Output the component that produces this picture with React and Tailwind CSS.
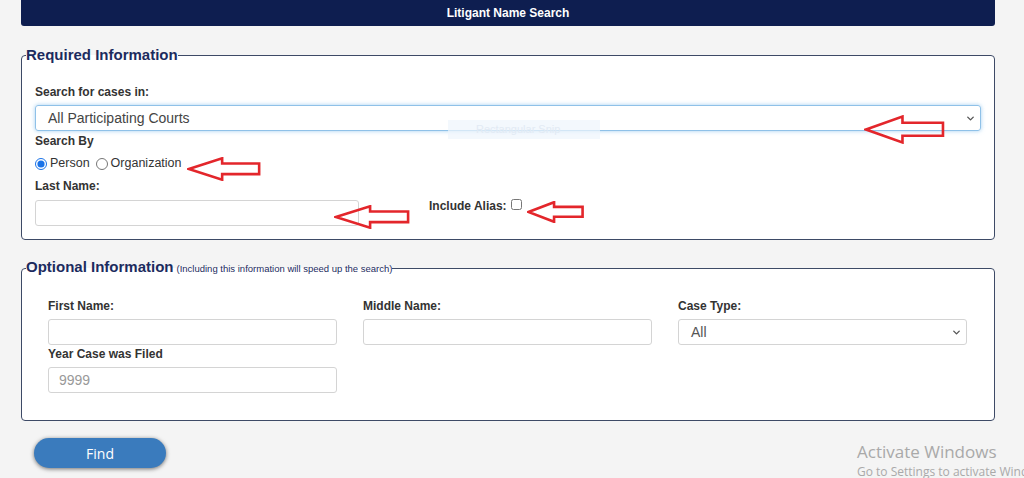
import React from 'react';
import { ChevronDown } from 'lucide-react';

const RedArrow = ({ className }) => (
  <svg
    className={`absolute pointer-events-none ${className}`}
    viewBox="0 0 80 28"
    preserveAspectRatio="none"
  >
    <polygon
      points="2,14 38,1.5 38,7.5 78,7.5 78,20 38,20 38,26.5"
      fill="none"
      stroke="#e3262b"
      strokeWidth="2.6"
      strokeLinejoin="miter"
      vectorEffect="non-scaling-stroke"
    />
  </svg>
);

const Label = ({ children, className = '' }) => (
  <div className={`text-[12px] leading-[14px] font-bold text-[#333] ${className}`}>{children}</div>
);

const TextInput = ({ placeholder, className = '' }) => (
  <input
    type="text"
    placeholder={placeholder}
    className={`h-[26px] border border-[#d4d4d4] rounded-[3px] bg-white px-[10px] text-[14px] text-[#555] placeholder:text-[#999] outline-none ${className}`}
  />
);

const App = () => {
  return (
    <div
      className="relative w-[1024px] h-[478px] overflow-hidden bg-[#f4f4f4]"
      style={{ fontFamily: '"Liberation Sans", Arial, sans-serif' }}
    >
      {/* header */}
      <div className="ml-[21px] w-[974px] h-[26px] bg-[#0e1e50] rounded-b-[3px] flex items-center justify-center">
        <span className="text-white text-[12px] font-bold">Litigant Name Search</span>
      </div>

      {/* required info */}
      <fieldset className="ml-[21px] mt-[20px] w-[974px] border border-[#3d4a66] rounded-[4px] bg-white px-[13px] pb-[13px]">
        <legend className="text-[15px] leading-[18px] font-bold text-[#1c2b5e] -ml-[9px]">Required Information</legend>
        <Label className="mt-[21px]">Search for cases in:</Label>
        <div className="relative mt-[6px] h-[26px] border border-[#8fc1e8] rounded-[3px] shadow-[0_0_4px_rgba(102,175,233,0.6)] flex items-center pl-[12px]">
          <span className="text-[14px] text-[#444]">All Participating Courts</span>
          <ChevronDown className="absolute right-[4px] top-[7px] text-[#555]" size={11} strokeWidth={3} />
        </div>
        <Label className="mt-[3px]">Search By</Label>
        <div className="mt-[8px] flex items-center text-[12.5px] text-[#333] h-[15px]">
          <input type="radio" name="by" defaultChecked className="w-[12px] h-[12px] m-0 accent-[#1a73e8]" />
          <span className="ml-[3px]">Person</span>
          <input type="radio" name="by" className="ml-[6px] w-[12px] h-[12px] m-0" />
          <span className="ml-[3px]">Organization</span>
        </div>
        <div className="flex">
          <div>
            <Label className="mt-[8px]">Last Name:</Label>
            <TextInput className="mt-[7px] w-[324px]" />
          </div>
          <div className="ml-[70px] mt-[28px] flex items-start">
            <Label>Include Alias:</Label>
            <input type="checkbox" className="ml-[4px] mt-0 w-[11px] h-[11px] m-0" />
          </div>
        </div>
      </fieldset>

      {/* optional info */}
      <fieldset className="ml-[21px] mt-[18px] w-[974px] border border-[#3d4a66] rounded-[4px] bg-white pl-[26px] pr-[27px] pb-[27px]">
        <legend className="-ml-[22px] text-[#1c2b5e] leading-[18px]">
          <span className="text-[15px] font-bold">Optional Information</span>
          <span className="text-[9.5px] ml-[3px]">(Including this information will speed up the search)</span>
        </legend>
        <div className="grid grid-cols-3 gap-x-[26px] mt-[21px]">
          <div>
            <Label>First Name:</Label>
            <TextInput className="mt-[6px] w-full" />
          </div>
          <div>
            <Label>Middle Name:</Label>
            <TextInput className="mt-[6px] w-full" />
          </div>
          <div>
            <Label>Case Type:</Label>
            <div className="relative mt-[6px] h-[26px] border border-[#d4d4d4] rounded-[3px] flex items-center pl-[12px]">
              <span className="text-[14px] text-[#555]">All</span>
              <ChevronDown className="absolute right-[4px] top-[7px] text-[#555]" size={11} strokeWidth={3} />
            </div>
          </div>
          <div>
            <Label className="mt-[2px]">Year Case was Filed</Label>
            <TextInput placeholder="9999" className="mt-[6px] w-full" />
          </div>
        </div>
      </fieldset>

      <button
        className="ml-[34px] mt-[17px] w-[132px] h-[30px] rounded-full bg-[#3a7bbd] text-white text-[14px] shadow-[0_1px_4px_rgba(0,0,0,0.55)]"
        style={{ fontFamily: '"Open Sans", sans-serif' }}
      >
        Find
      </button>

      {/* faint snip tooltip */}
      <div className="absolute left-[448px] top-[120px] w-[152px] h-[19px] bg-[#eef5fc]/70 flex items-center pl-[28px] text-[11px] text-[#e2eaf4]">
        Rectangular Snip
      </div>

      {/* annotations */}
      <RedArrow className="left-[864px] top-[115px] w-[81px] h-[29px]" />
      <RedArrow className="left-[187px] top-[157px] w-[74px] h-[24px]" />
      <RedArrow className="left-[334px] top-[205px] w-[76px] h-[24px]" />
      <RedArrow className="left-[527px] top-[201px] w-[57px] h-[22px]" />

      {/* windows watermark */}
      <div
        className="absolute left-[857px] top-[440px] text-[#a9a9a9] whitespace-nowrap pointer-events-none"
        style={{ fontFamily: '"Open Sans", sans-serif' }}
      >
        <div className="text-[17px] leading-[23px]">Activate Windows</div>
        <div className="text-[12px] leading-[16px] mt-[1px]">Go to Settings to activate Windows.</div>
      </div>
    </div>
  );
};

export default App;
